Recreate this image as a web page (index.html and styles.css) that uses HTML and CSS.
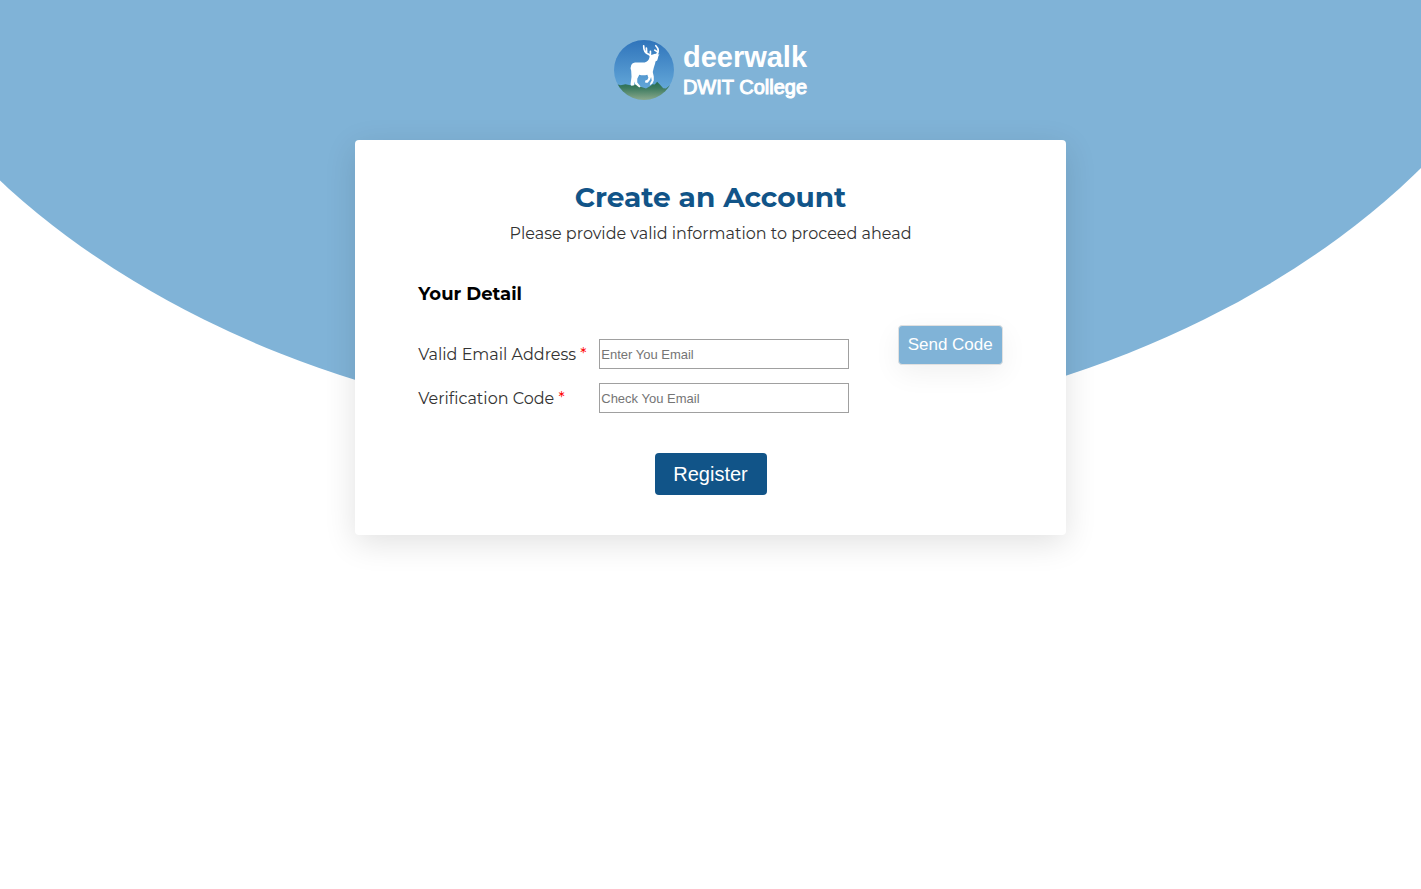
FILE: index.html
```html
<!DOCTYPE html>
<html lang="en">
<head>
<meta charset="utf-8">
<meta name="viewport" content="width=device-width, initial-scale=1">
<title>Create an Account</title>
<link rel="stylesheet" href="styles.css">
</head>
<body class="page">
<header class="brand">
  <svg class="brand-mark" viewBox="24 24 178 178" aria-hidden="true">
    <defs>
      <linearGradient id="sky" x1="0" y1="0" x2="0" y2="1"><stop offset="0" stop-color="#2f74bb"/><stop offset=".75" stop-color="#5fa3d6"/><stop offset="1" stop-color="#6fb0dd"/></linearGradient>
      <linearGradient id="hill" x1="0" y1="0" x2="0" y2="1"><stop offset="0" stop-color="#256b50"/><stop offset=".35" stop-color="#3d7b60"/><stop offset="1" stop-color="#8aa98c"/></linearGradient>
      <clipPath id="disc"><circle cx="113" cy="113" r="89"/></clipPath>
    </defs>
    <g clip-path="url(#disc)">
      <path fill="url(#sky)" d="M24 24h178v178H24z"/>
      <path fill="url(#hill)" d="M24 153L44 158L58 155L76 159L90 155L103 163L119 168L133 160L138 155L145 156L152 148L162 158L170 167L178 168L190 158L202 153V202H24z"/>
    </g>
    <path fill="#fff" d="M75 99C78 92 84 91 92 91L115 91C123 89 127 84 129 77L130 70L146 65L152 66L159 67L156 71L154 79L152 85L147 88L146 94L142 106L139 119L142 132L142 144L138 153L130 158L132 151L136 144L134 134L131 142L124 151L117 151L116 145L123 142L126 136L123 127C113 130 106 129 99 127L93 139L93 150L103 162L99 165L87 155L84 147L84 158L76 160L73 156L76 133L75 115L73 108z"/>
    <path fill="none" stroke="#fff" stroke-width="5" stroke-linejoin="round" stroke-linecap="round" d="M112 41C112 54 117 63 126 66L134 72M120 48L121 61M132 58V70M148 41C156 49 158 59 150 68M145 54L154 60"/>
  </svg>
  <div class="brand-text"><span class="brand-name">deerwalk</span><span class="brand-sub">DWIT College</span></div>
</header>
<main class="card">
  <h1 class="title">Create an Account</h1>
  <p class="intro">Please provide valid information to proceed ahead</p>
  <form class="form">
    <h2 class="section">Your Detail</h2>
    <div class="row">
      <label class="label" for="email">Valid Email Address <span class="required">*</span></label>
      <input class="input" id="email" type="email" placeholder="Enter You Email">
      <button class="send" type="button">Send Code</button>
    </div>
    <div class="row">
      <label class="label" for="code">Verification Code <span class="required">*</span></label>
      <input class="input" id="code" type="text" placeholder="Check You Email">
    </div>
    <button class="register" type="submit">Register</button>
  </form>
</main>
</body>
</html>
```
FILE: styles.css
```css
* {
  box-sizing: border-box;
}

.page {
  margin: 0;
  padding: 40px 0;
  background: #fff;
  color: #000;
  font-family: Montserrat, Inter, sans-serif;
}

.page::before {
  content: "";
  position: absolute;
  z-index: -1;
  top: 0;
  left: 0;
  width: 100%;
  height: 440px;
  background: #80b3d7;
  clip-path: ellipse(63.34% 667px at 49.54% -235px);
}

.brand {
  display: flex;
  justify-content: center;
  gap: 9px;
  height: 60px;
  color: #fff;
  font-family: "Liberation Sans", Arial, sans-serif;
}

.brand-mark {
  width: 60px;
  height: 60px;
}

.brand-text {
  display: flex;
  flex-direction: column;
}

.brand-name {
  font-size: 29px;
  font-weight: 700;
  line-height: 34px;
}

.brand-sub {
  font-size: 20px;
  line-height: 26px;
  -webkit-text-stroke: 1px #fff;
}

.card {
  width: 50%;
  min-width: 680px;
  margin: 40px auto 0;
  padding: 40px 63px;
  background: #fff;
  border-radius: 4px;
  box-shadow: 0 8px 32px rgba(0, 0, 0, 0.12);
}

.title {
  margin: 0;
  color: #115488;
  font-size: 28px;
  font-weight: 700;
  line-height: 34px;
  text-align: center;
}

.intro {
  margin: 8px 0 0;
  color: #333;
  font-size: 16px;
  font-weight: 400;
  line-height: 24px;
  text-align: center;
}

.form {
  display: flex;
  flex-direction: column;
  margin-top: 37px;
}

.section {
  margin: 0 0 19px;
  font-size: 18px;
  font-weight: 700;
  line-height: 23px;
}

.row {
  display: grid;
  grid-template-columns: 181px 250px 1fr;
  grid-template-rows: 44px;
  align-items: start;
}

.label {
  margin-top: 16px;
  color: #333;
  font-size: 16px;
  font-weight: 400;
  line-height: 28px;
}

.required {
  color: #f00;
}

.input {
  width: 250px;
  height: 30px;
  margin-top: 14px;
  padding: 1px;
  border: 1px solid #a0a0a0;
  background: #fff;
  font-family: "Liberation Sans", Arial, sans-serif;
  font-size: 13px;
}

.input::placeholder {
  color: #757575;
}

.send {
  justify-self: end;
  height: 40px;
  padding: 0 9px;
  border: 1px solid #e0e0e0;
  border-radius: 4px;
  background: #80b3d7;
  box-shadow: 0 8px 28px rgba(0, 0, 0, 0.06);
  color: #fff;
  font-family: "Liberation Sans", Arial, sans-serif;
  font-size: 17px;
}

.register {
  align-self: center;
  width: 112px;
  height: 42px;
  margin-top: 40px;
  border: 0;
  border-radius: 4px;
  background: #115488;
  color: #fff;
  font-family: "Liberation Sans", Arial, sans-serif;
  font-size: 20px;
}
```
